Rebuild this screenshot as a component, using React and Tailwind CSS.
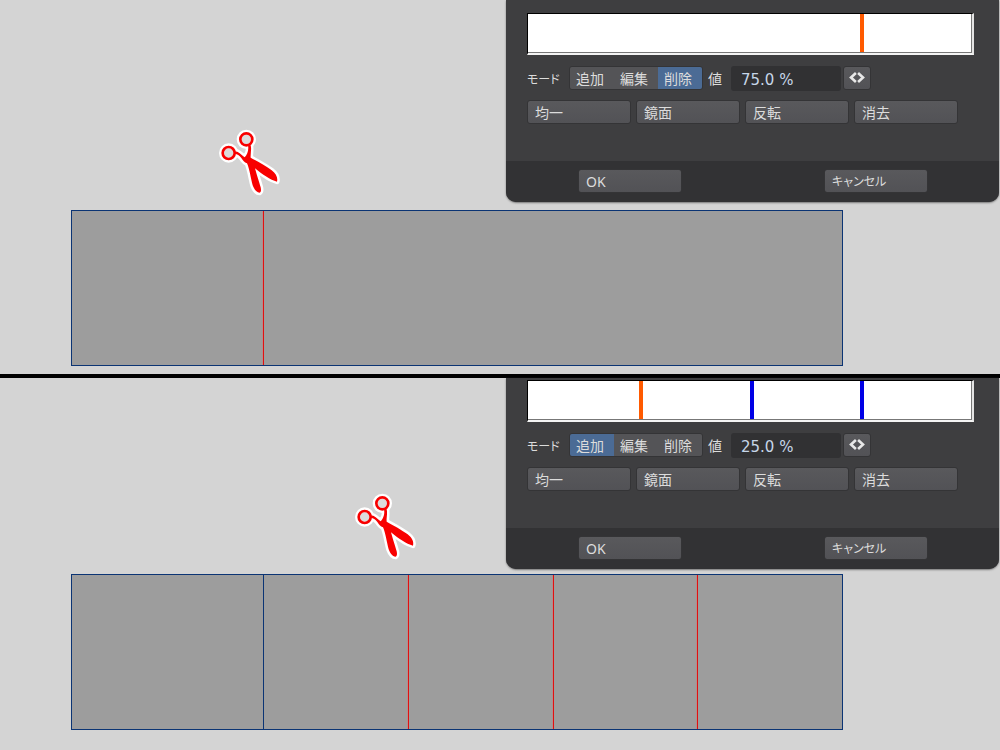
import React, { useState } from "react";

const HANDLES = (
  <>
    <circle cx="56" cy="99" r="18" fill="none" />
    <circle cx="109" cy="58" r="18" fill="none" />
  </>
);

const BLADES =
  "M73 94 C86 94 93 104 104 112 C112 104 117 90 114 76 L121 73 C126 86 121 99 122 113 C142 124 168 138 185 151 C199 162 204 174 201 185 C181 180 157 163 135 145 C139 160 147 184 152 202 C154 211 153 216 149 218 C139 218 132 207 128 196 C122 174 119 148 111 130 C103 128 99 121 94 114 C88 106 82 102 74 102 Z";

function Scissors({ className }) {
  return (
    <svg
      viewBox="0 0 240 240"
      aria-hidden="true"
      className={"absolute size-20 " + className}
    >
      <g stroke="#fff" strokeWidth="22" strokeLinejoin="round">
        {HANDLES}
        <path d={BLADES} fill="#fff" strokeWidth="15" />
      </g>
      <circle cx="56" cy="99" r="14" fill="#dcdcdc" />
      <circle cx="109" cy="58" r="14" fill="#dcdcdc" />
      <g stroke="#f80000" strokeWidth="8">
        {HANDLES}
      </g>
      <path d={BLADES} fill="#f80000" />
    </svg>
  );
}

const BUTTON =
  "rounded-[3px] border border-[#343436] bg-linear-to-b from-[#59595c] to-[#525256] text-[#dcdcdc]";

function WideButton({ children, small }) {
  return (
    <button
      type="button"
      className={
        BUTTON +
        " h-6 w-[104px] px-[7px] pt-px text-left leading-5 " +
        (small ? "text-[12px]" : "text-[14px]")
      }
    >
      {children}
    </button>
  );
}

function Dialog({ id, initialMode, value, markers, className }) {
  const [mode, setMode] = useState(initialMode);
  return (
    <form
      onSubmit={(e) => e.preventDefault()}
      className={
        "mr-px ml-auto w-[493px] max-w-full overflow-hidden rounded-b-[10px] bg-[#3e3e40] shadow-[0_1px_2px_#777] " +
        className
      }
    >
      <div className="mr-[25px] ml-[21px] border-t border-r-2 border-b-2 border-l border-t-black border-r-[#e4e4e4] border-b-[#f4f4f4] border-l-black">
        <div className="relative h-[39px] border-r border-b border-[#777] bg-white">
          {markers.map((m) => (
            <span
              key={m.at}
              className={
                "absolute top-0 h-full w-1 " +
                (m.active ? "bg-[#ff5a00]" : "bg-[#0000e6]")
              }
              style={{ left: m.at + "%" }}
            />
          ))}
        </div>
      </div>

      <div className="mt-[11px] ml-[21px] flex h-6 items-center text-[#dcdcdc]">
        <span className="w-[42px] pt-[3px] text-[12px] leading-5">モード</span>
        <div
          role="group"
          aria-label="モード"
          className="flex h-6 overflow-hidden rounded-[3px] border border-[#343436]"
        >
          {["追加", "編集", "削除"].map((m) => (
            <button
              key={m}
              type="button"
              aria-pressed={mode === m}
              onClick={() => setMode(m)}
              className={
                "w-11 pt-[2px] pl-[6px] text-left text-[14px] leading-5 " +
                (mode === m ? "bg-[#4b6b95]" : "bg-[#545457]")
              }
            >
              {m}
            </button>
          ))}
        </div>
        <label htmlFor={id} className="ml-[5px] pt-[2px] text-[14px] leading-5">
          値
        </label>
        <input
          id={id}
          type="text"
          defaultValue={value}
          className="ml-[9px] h-[25px] w-[110px] rounded-[3px] bg-[#313133] px-[10px] pt-[4px] font-['DejaVu_Sans','Noto_Sans_CJK_JP',sans-serif] text-[15px] leading-5 text-[#c6d6e8] outline-none"
        />
        <button
          type="button"
          aria-label="値の範囲"
          className={BUTTON + " ml-[2px] flex h-6 w-7 items-center justify-center"}
        >
          <svg
            viewBox="0 0 16 12"
            className="h-3 w-4"
            fill="none"
            stroke="#e8e8e8"
            strokeWidth="2.6"
          >
            <path d="M6.9 1 L2 5.5 L6.9 10 M9.1 1 L14 5.5 L9.1 10" />
          </svg>
        </button>
      </div>

      <div className="mt-[10px] ml-[21px] flex gap-[5px]">
        <WideButton>均一</WideButton>
        <WideButton>鏡面</WideButton>
        <WideButton>反転</WideButton>
        <WideButton>消去</WideButton>
      </div>

      <div className="mt-[37px] flex justify-between bg-[#323234] pt-2 pr-[71px] pb-[9px] pl-[72px]">
        <WideButton>OK</WideButton>
        <WideButton small>キャンセル</WideButton>
      </div>
    </form>
  );
}

function Mesh({ className, children }) {
  return (
    <div
      className={
        "mr-[157px] ml-[71px] grid h-[156px] border border-[#0b3474] bg-[#9d9d9d] " +
        className
      }
    >
      {children}
    </div>
  );
}

const CUT = "border-r border-[#e01010] shadow-[inset_-1px_0_#b48c8c]";

export default function App() {
  return (
    <main className="min-h-screen bg-[#d4d4d4] font-['Noto_Sans','Noto_Sans_CJK_JP',sans-serif] [font-feature-settings:'palt']">
      <section className="relative pb-2">
        <Dialog
          id="value-top"
          className="pt-[13px]"
          initialMode="削除"
          value="75.0 %"
          markers={[{ at: 75, active: true }]}
        />
        <Mesh className="mt-2 grid-cols-[192fr_578fr]">
          <div className={CUT} />
          <div />
        </Mesh>
        <Scissors className="top-[120px] left-[210px]" />
      </section>

      <hr className="h-1 border-0 bg-black" />

      <section className="relative pb-5">
        <Dialog
          id="value-bottom"
          className="pt-[2px]"
          initialMode="追加"
          value="25.0 %"
          markers={[
            { at: 25, active: true },
            { at: 50, active: false },
            { at: 75, active: false },
          ]}
        />
        <Mesh className="mt-[5px] grid-cols-[192fr_145fr_145fr_144fr_144fr]">
          <div className="border-r border-[#0b3474]" />
          <div className={CUT} />
          <div className={CUT} />
          <div className={CUT} />
          <div />
        </Mesh>
        <Scissors className="top-[106px] left-[346px]" />
      </section>
    </main>
  );
}
